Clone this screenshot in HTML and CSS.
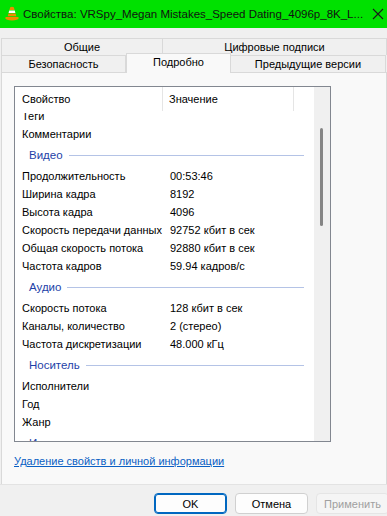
FILE: index.html
```html
<!DOCTYPE html>
<html lang="ru">
<head>
<meta charset="utf-8">
<link rel="stylesheet" href="styles.css">
</head>
<body>
<div class="win">
  <div class="titlebar">
    <svg class="vlc" width="14" height="15" viewBox="0 0 14 15">
      <path d="M5.2 1.2 Q7 0.3 8.8 1.2 L9.6 4 L4.4 4 Z" fill="#f08a00"/>
      <path d="M4.2 4.6 L9.8 4.6 L10.4 7 L3.6 7 Z" fill="#ffffff"/>
      <path d="M3.4 7.6 L10.6 7.6 L11.3 10.3 L2.7 10.3 Z" fill="#f08a00"/>
      <path d="M1 11 L13 11 Q14 11 13.6 12.6 Q13 14.4 7 14.4 Q1 14.4 0.4 12.6 Q0 11 1 11 Z" fill="#f08a00"/>
    </svg>
    <span class="title">Свойства: VRSpy_Megan Mistakes_Speed Dating_4096p_8K_L...</span>
    <svg class="close" width="12" height="12" viewBox="0 0 12 12"><path d="M1 1 L11 11 M11 1 L1 11" stroke="#1a1a1a" stroke-width="1.1"/></svg>
  </div>
  <div class="tabs">
    <div class="tabrow row1">
      <div class="tab t-gen">Общие</div>
      <div class="tab t-sig">Цифровые подписи</div>
    </div>
    <div class="tabrow row2">
      <div class="tab t-sec">Безопасность</div>
      <div class="tab t-det active">Подробно</div>
      <div class="tab t-prev">Предыдущие версии</div>
    </div>
  </div>
  <div class="panel">
    <div class="listbox">
      <div class="listmain">
        <div class="lhead">
          <div class="hcol hc1">Свойство</div>
          <div class="hcol hc2">Значение</div>
          <div class="hcol hc3"></div>
        </div>
        <div class="viewport">
          <div class="rows">
            <div class="row"><span class="k">Теги</span><span class="v"></span></div>
            <div class="row"><span class="k">Комментарии</span><span class="v"></span></div>
            <div class="group"><span>Видео</span><i></i></div>
            <div class="row"><span class="k">Продолжительность</span><span class="v">00:53:46</span></div>
            <div class="row"><span class="k">Ширина кадра</span><span class="v">8192</span></div>
            <div class="row"><span class="k">Высота кадра</span><span class="v">4096</span></div>
            <div class="row"><span class="k">Скорость передачи данных</span><span class="v">92752 кбит в сек</span></div>
            <div class="row"><span class="k">Общая скорость потока</span><span class="v">92880 кбит в сек</span></div>
            <div class="row"><span class="k">Частота кадров</span><span class="v">59.94 кадров/с</span></div>
            <div class="group"><span>Аудио</span><i></i></div>
            <div class="row"><span class="k">Скорость потока</span><span class="v">128 кбит в сек</span></div>
            <div class="row"><span class="k">Каналы, количество</span><span class="v">2 (стерео)</span></div>
            <div class="row"><span class="k">Частота дискретизации</span><span class="v">48.000 кГц</span></div>
            <div class="group"><span>Носитель</span><i></i></div>
            <div class="row"><span class="k">Исполнители</span><span class="v"></span></div>
            <div class="row"><span class="k">Год</span><span class="v"></span></div>
            <div class="row"><span class="k">Жанр</span><span class="v"></span></div>
            <div class="group"><span>Источник</span><i></i></div>
          </div>
        </div>
      </div>
      <div class="scrollbar"><div class="thumb"></div></div>
    </div>
    <a class="link" href="#">Удаление свойств и личной информации</a>
  </div>
  <div class="footer">
    <button class="btn ok">OK</button>
    <button class="btn">Отмена</button>
    <button class="btn disabled">Применить</button>
  </div>
</div>
</body>
</html>
```
FILE: styles.css
```css
* { box-sizing: border-box; }
html, body { margin: 0; padding: 0; }
body {
  width: 387px;
  height: 516px;
  overflow: hidden;
  background: #f0f0f0;
  font-family: "Liberation Sans", Arial, sans-serif;
  font-size: 11px;
  color: #000;
}
.win { width: 387px; height: 516px; display: flex; flex-direction: column; }

.titlebar {
  height: 28px;
  background: #00e100;
  display: flex;
  align-items: center;
  padding-left: 5px;
  flex: none;
}
.vlc { flex: none; margin-right: 4px; margin-top: -1px; }
.title { font-size: 11.5px; color: #111; white-space: nowrap; flex: 1; overflow: hidden; }
.close { flex: none; margin-right: 3px; }

.tabs { margin-top: 10px; flex: none; }
.tabrow { display: flex; height: 17px; }
.row2 { height: 18px; }
.tab {
  background: #f0f0f0;
  border: 1px solid #d9d9d9;
  text-align: center;
  line-height: 16px;
  color: #000;
}
.row1 .tab { border-bottom: none; }
.t-gen { width: 162px; margin-left: 1px; }
.t-sig { width: 224px; border-left: none; }
.t-sec { width: 125px; margin-left: 1px; }
.t-det {
  width: 105px;
  margin-top: -2px;
  height: 20px;
  background: #f9f9f9;
  border-bottom: none;
  line-height: 16px;
  position: relative;
  z-index: 1;
}
.t-prev { width: 155px; border-left: none; }
.row2 .tab { border-bottom: none; }

.panel {
  height: 412px;
  background: #f9f9f9;
  border-top: 1px solid #d9d9d9;
  border-right: 1px solid #d9d9d9;
  margin-left: 1px;
  border-left: 1px solid #d9d9d9;
  padding: 13px 0 0 12px;
  flex: none;
  margin-top: -1px;
}
.listbox {
  width: 317px;
  height: 356px;
  border: 1px solid #828790;
  background: #fff;
  display: flex;
}
.listmain { width: 299px; display: flex; flex-direction: column; }
.lhead { height: 26px; display: flex; flex: none; }
.hcol { line-height: 24px; padding-left: 7px; white-space: nowrap; }
.hc1 { width: 148px; border-right: 1px solid #e5e5e5; height: 24px; }
.hc2 { width: 131px; border-right: 1px solid #e5e5e5; padding-left: 6px; height: 24px; }
.hc3 { flex: 1; }
.viewport { flex: 1; overflow: hidden; }
.rows { margin-top: -6px; }
.row { height: 18px; display: flex; align-items: center; white-space: nowrap; }
.k { width: 155px; padding-left: 7px; flex: none; overflow: hidden; }
.v { flex: 1; }
.group {
  height: 24px;
  display: flex;
  align-items: center;
  padding-left: 14px;
  padding-right: 10px;
  color: #1e3fa8;
  font-size: 11.5px;
}
.group span { margin-right: 6px; }
.group i { flex: 1; height: 1px; background: #b4c3e6; }

.scrollbar { width: 16px; background: #f0f0f0; position: relative; }
.thumb {
  position: absolute;
  left: 6px;
  top: 41px;
  width: 3px;
  height: 98px;
  background: #858585;
  border-radius: 2px;
}

.link {
  display: inline-block;
  margin-top: 13px;
  margin-left: 0;
  color: #0a5fc4;
  text-decoration: underline;
  font-size: 11px;
}

.footer {
  flex: 1;
  background: #f0f0f0;
  border-top: 1px solid #e3e3e3;
  display: flex;
  align-items: flex-start;
  padding: 8px 0 0 154px;
  gap: 8px;
}
.btn {
  font-family: inherit;
  font-size: 11px;
  width: 73px;
  height: 21px;
  background: #fdfdfd;
  border: 1px solid #d0d0d0;
  border-radius: 4px;
  color: #000;
  padding: 0;
  flex: none;
}
.btn.ok { border: 1px solid #0067c0; box-shadow: inset 0 0 0 1px #0067c0; }
.btn.disabled { color: #a0a0a0; border-color: #e5e5e5; background: #f5f5f5; }
```
